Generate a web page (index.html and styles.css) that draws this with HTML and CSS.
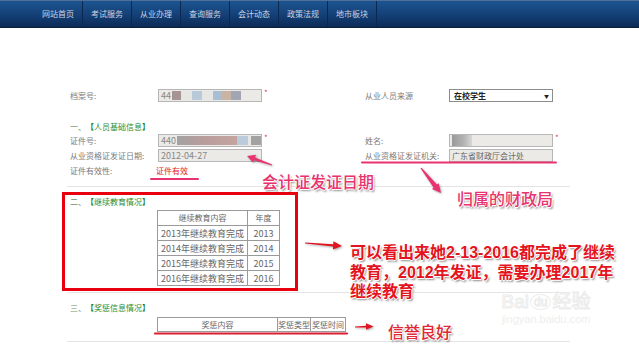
FILE: index.html
```html
<!DOCTYPE html>
<html lang="zh-CN">
  <head>
    <meta charset="UTF-8" />
    <meta name="viewport" content="width=device-width, initial-scale=1.0" />
    <title>从业人员信息</title>
    <link rel="stylesheet" href="styles.css">
  </head>
  <body>
    <div class="nav">
      <a class="nav-item">网站首页</a>
      <a class="nav-item">考试服务</a>
      <a class="nav-item">从业办理</a>
      <a class="nav-item">查询服务</a>
      <a class="nav-item">会计动态</a>
      <a class="nav-item">政策法规</a>
      <a class="nav-item">地市板块</a>
    </div>

    <div class="main">
      <div class="row">
        <div class="half">
          <span class="label">档案号:</span>
          <div class="input"><span>44</span><i class="blur blur-file"></i></div>
          <span class="req">*</span>
        </div>
        <div class="half half-right">
          <span class="label">从业人员来源</span>
          <div class="select">在校学生<span class="caret">▼</span></div>
        </div>
      </div>

      <div class="section sec-basic">
        <div class="sec-title"><span class="sec-no">一、</span><b>【</b>人员基础信息<b>】</b></div>
        <div class="rows">
          <div class="row">
            <div class="half">
              <span class="label">证件号:</span>
              <div class="input"><span>440</span><i class="blur blur-id"></i></div>
              <span class="req">*</span>
            </div>
            <div class="half half-right">
              <span class="label">姓名:</span>
              <div class="input"><i class="blur blur-name"></i></div>
              <span class="req">*</span>
            </div>
          </div>
          <div class="row">
            <div class="half">
              <span class="label">从业资格证发证日期:</span>
              <div class="input">2012-04-27</div>
            </div>
            <div class="half half-right">
              <span class="label">从业资格证发证机关:</span>
              <div class="input input-dark">广东省财政厅会计处</div>
            </div>
          </div>
          <div class="row row-tall">
            <div class="half">
              <span class="label">证件有效性:</span>
              <span class="valid">证件有效</span>
            </div>
          </div>
        </div>
      </div>

      <div class="section sec-edu">
        <div class="sec-title"><span class="sec-no">二、</span><b>【</b>继续教育情况<b>】</b></div>
        <table class="grid grid-edu">
          <tr><th>继续教育内容</th><th>年度</th></tr>
          <tr><td>2013年继续教育完成</td><td>2013</td></tr>
          <tr><td>2014年继续教育完成</td><td>2014</td></tr>
          <tr><td>2015年继续教育完成</td><td>2015</td></tr>
          <tr><td>2016年继续教育完成</td><td>2016</td></tr>
        </table>
      </div>

      <div class="section sec-award">
        <div class="sec-title"><span class="sec-no">三、</span><b>【</b>奖惩信息情况<b>】</b></div>
        <table class="grid grid-award">
          <tr><th>奖惩内容</th><th>奖惩类型</th><th>奖惩时间</th></tr>
        </table>
      </div>
    </div>

    <!-- annotations drawn over the screenshot -->
    <div class="redbox"></div>
    <svg class="marks" width="639" height="346" viewBox="0 0 639 346">
      <g stroke-linecap="round" fill="none">
        <line x1="151" y1="179" x2="198" y2="179" stroke="#e8336f" stroke-width="2" />
        <line x1="362" y1="162.5" x2="556" y2="162.5" stroke="#e8336f" stroke-width="2" />
        <line x1="155" y1="333.5" x2="347" y2="333.5" stroke="#d81e30" stroke-width="2.2" />
      </g>
      <g class="arrows">
        <polygon fill="#e8336f" points="272.2,164.4 271.8,165.6 254,160.2 253,162.6 247,156 256,154.8 255,157.4" />
        <polygon fill="#e8336f" points="421.5,167.7 420.5,168.3 433.5,187.4 432,189 441,193 438.7,183.3 437,184.6" />
        <polygon fill="#e01522" points="305,242.6 305,243.4 333,246.6 333,249.4 342,246 333.4,241.3 333.2,244.2" />
        <polygon fill="#e01522" points="355,326.6 355,327.6 366,327.4 366,329.8 373.5,326.4 366,323.2 366,325.8" />
      </g>
    </svg>

    <div class="note note-date">会计证发证日期</div>
    <div class="note note-office">归属的财政局</div>
    <div class="note note-edu">可以看出来她2-13-2016都完成了继续<br />教育，2012年发证，需要办理2017年<br />继续教育</div>
    <div class="note note-credit">信誉良好</div>

    <div class="watermark">
      <div class="wm-logo">Bai<span class="wm-du">du</span>经验</div>
      <div class="wm-url">jingyan.baidu.com</div>
    </div>
  </body>
</html>
```

FILE: styles.css
```css
* {
  box-sizing: border-box;
}
body {
  margin: 0;
  width: 639px;
  height: 346px;
  overflow: hidden;
  position: relative;
  background: #ffffff;
  color: #7a7a7a;
  font-family: "Noto Sans CJK SC", "Noto Sans", sans-serif;
  font-size: 8px;
  line-height: 1;
}

/* top navigation */
.nav {
  height: 28px;
  display: flex;
  padding-left: 34px;
  background: linear-gradient(#1d5591, #143f75 55%, #0c2b56);
  border-top: 1px solid #4e709a;
  border-bottom: 1px solid #0a1f3c;
}
.nav-item {
  width: 49px;
  display: flex;
  align-items: center;
  justify-content: center;
  color: #c9d4e4;
  font-size: 8px;
  border-right: 1px solid #0a2850;
}

/* form */
.main {
  margin-left: 67px;
  width: 503px;
  padding-top: 61px;
}
.row {
  display: flex;
  height: 13px;
  align-items: center;
}
.row-tall {
  height: 14px;
}
.half {
  width: 295px;
  display: flex;
  align-items: center;
  height: 100%;
}
.half-right {
  width: 208px;
}
.label {
  width: 91px;
  padding-left: 3px;
  white-space: nowrap;
}
.half-right .label {
  width: 87px;
}
.input {
  width: 104px;
  height: 13px;
  display: flex;
  align-items: center;
  gap: 1px;
  padding-left: 2px;
  background: #ebeae6;
  border: 1px solid #b6b6b6;
  color: #888888;
  font-size: 9px;
  white-space: nowrap;
}
.input-dark {
  color: #666666;
  font-size: 8px;
}
.req {
  align-self: flex-start;
  margin-left: 2px;
  color: #e04060;
  font-size: 8px;
}
.blur {
  display: block;
  height: 9px;
  filter: blur(0.6px);
}
.blur-file {
  width: 69px;
  background: linear-gradient(90deg, #a69494 0 13%, #e6e6e4 13% 29%, #b9c9d9 29% 43%, #e6e6e4 43% 59%, #a9bdd3 59% 72%, #c9b3a3 72% 86%, #a2a6b2 86%);
}
.blur-id {
  width: 85px;
  background: linear-gradient(90deg, #a2a2a2 0, #b89c9c 30%, #c4a49e 70%, #c4a49e 71%, #bccbdb 72% 84%, #e6e6e4 84% 88%, #a2a2a2 88%);
}
.blur-name {
  width: 20px;
  height: 11px;
  background: linear-gradient(90deg, #999999, #b4b4b4 60%, #d8d8d8);
}
.select {
  width: 104px;
  height: 13px;
  display: flex;
  align-items: center;
  justify-content: space-between;
  padding: 0 3px 0 4px;
  background: #ffffff;
  border: 1px solid #8c8c8c;
  color: #222222;
  font-weight: bold;
  font-size: 8px;
}
.caret {
  font-size: 5px;
  color: #222222;
}
.valid {
  margin-left: -2px;
  color: #e02020;
  font-size: 8px;
}

/* sections */
.section {
  border-bottom: 1px solid #e4e4e4;
}
.sec-basic {
  margin-top: 19px;
  padding-bottom: 8px;
}
.sec-edu {
  padding-top: 9px;
  padding-bottom: 6px;
}
.sec-award {
  padding-top: 9px;
  padding-bottom: 9px;
}
.sec-title {
  height: 12px;
  padding-left: 3px;
  display: flex;
  align-items: center;
  color: #2c8c2c;
  font-size: 8px;
}
.sec-no {
  color: #6f8f6f;
}
.sec-title b {
  color: #1a7f1a;
}
.rows {
  display: flex;
  flex-direction: column;
  gap: 2px;
  margin-top: 1px;
}

.grid {
  margin: 2px 0 0 90px;
  border-collapse: collapse;
  color: #666666;
  text-align: center;
}
.grid th,
.grid td {
  border: 1px solid #9a9a9a;
  padding: 0;
  font-weight: normal;
}
.grid-edu th,
.grid-edu td {
  height: 15px;
  font-size: 9px;
}
.grid-edu th {
  font-size: 8px;
}
.grid-edu th:first-child {
  width: 90px;
}
.grid-edu th:last-child {
  width: 32px;
}
.grid-award {
  margin-top: 3px;
}
.grid-award th {
  height: 14px;
  font-size: 8px;
  white-space: nowrap;
}
.grid-award th:nth-child(1) {
  width: 120px;
}
.grid-award th:nth-child(2) {
  width: 33px;
}
.grid-award th:nth-child(3) {
  width: 35px;
}

/* annotations */
.redbox {
  position: absolute;
  left: 62px;
  top: 192px;
  width: 236px;
  height: 99px;
  border: 3px solid #e8000e;
}
.marks {
  position: absolute;
  left: 0;
  top: 0;
  pointer-events: none;
}
.arrows {
  filter: drop-shadow(1px 1px 1px rgba(0, 0, 0, 0.35));
}
.note {
  position: absolute;
  white-space: nowrap;
  font-family: "Liberation Sans", "Noto Sans CJK SC", sans-serif;
  font-size: 16px;
  font-weight: 500;
  line-height: 1;
  color: #e8336f;
  text-shadow: -1px 0 #fff, 1px 0 #fff, 0 -1px #fff, 0 1px #fff, 1.5px 1.5px 2px rgba(0, 0, 0, 0.45);
}
.note-date {
  left: 262px;
  top: 175px;
}
.note-office {
  left: 457px;
  top: 192px;
}
.note-edu {
  left: 350px;
  top: 243px;
  line-height: 19.5px;
  font-weight: bold;
  color: #e4141e;
}
.note-credit {
  left: 388px;
  top: 325px;
  color: #e02838;
}

.watermark {
  position: absolute;
  left: 490px;
  top: 292px;
  width: 112px;
  text-align: center;
  color: #eeeeee;
  font-family: "Liberation Sans", "Noto Sans CJK SC", sans-serif;
}
.wm-logo {
  font-size: 19px;
  color: transparent;
  -webkit-text-stroke: 1px #ececec;
  display: flex;
  align-items: center;
  justify-content: center;
  gap: 1px;
}
.wm-du {
  font-size: 12px;
  border: 1px solid #ececec;
  border-radius: 50%;
  padding: 1px 3px;
}
.wm-url {
  margin-top: 3px;
  font-size: 11px;
}
```
